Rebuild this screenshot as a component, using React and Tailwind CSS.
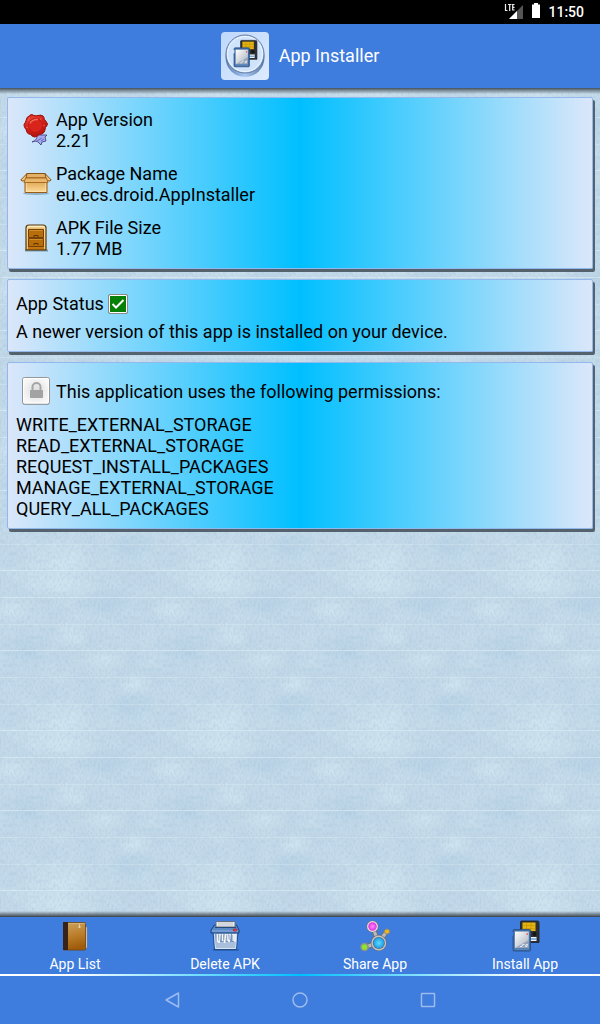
import React from "react";

const permissions = [
  "WRITE_EXTERNAL_STORAGE",
  "READ_EXTERNAL_STORAGE",
  "REQUEST_INSTALL_PACKAGES",
  "MANAGE_EXTERNAL_STORAGE",
  "QUERY_ALL_PACKAGES",
];

// Light woven fabric, one tile repeated, with a pale thread every few rows
const FabricBackground = () => (
  <svg className="absolute inset-0 w-full h-full" aria-hidden="true">
    <defs>
      <filter id="blotches" filterUnits="userSpaceOnUse" x="0" y="0" width="160" height="160" colorInterpolationFilters="sRGB">
        <feTurbulence type="fractalNoise" baseFrequency="0.05" numOctaves="4" seed="8" stitchTiles="stitch" />
        <feColorMatrix values="0 0 0 0 0.86  0 0 0 0 0.93  0 0 0 0 0.96  2.4 0 0 0 -0.9" />
      </filter>
      <filter id="weave" filterUnits="userSpaceOnUse" x="0" y="0" width="160" height="160" colorInterpolationFilters="sRGB">
        <feTurbulence type="fractalNoise" baseFrequency="0.5 0.25" numOctaves="2" seed="3" stitchTiles="stitch" />
        <feColorMatrix values="0 0 0 0 0.6  0 0 0 0 0.74  0 0 0 0 0.84  0 1.6 0 0 -0.6" />
      </filter>
      <radialGradient id="pale">
        <stop stopColor="#d6e8f2" stopOpacity=".7" />
        <stop offset="1" stopColor="#d6e8f2" stopOpacity="0" />
      </radialGradient>
      <radialGradient id="deep">
        <stop stopColor="#b0cce2" stopOpacity=".45" />
        <stop offset="1" stopColor="#b0cce2" stopOpacity="0" />
      </radialGradient>
      <pattern id="fabric" width="160" height="160" patternUnits="userSpaceOnUse">
        <rect width="160" height="160" fill="#c2d8e8" />
        <rect width="160" height="160" filter="url(#blotches)" opacity=".25" />
        <g fill="url(#pale)">
          <ellipse cx="60" cy="-4" rx="48" ry="30" />
          <ellipse cx="60" cy="156" rx="48" ry="30" />
          <ellipse cx="60" cy="18" rx="44" ry="14" />
          <ellipse cx="12" cy="42" rx="22" ry="14" />
          <ellipse cx="172" cy="42" rx="22" ry="14" />
          <ellipse cx="72" cy="66" rx="20" ry="14" />
          <ellipse cx="104" cy="92" rx="24" ry="12" />
          <ellipse cx="136" cy="116" rx="20" ry="12" />
        </g>
        <g fill="url(#deep)">
          <ellipse cx="24" cy="84" rx="40" ry="18" />
          <ellipse cx="184" cy="84" rx="40" ry="18" />
          <ellipse cx="110" cy="36" rx="40" ry="16" />
          <ellipse cx="128" cy="140" rx="30" ry="20" />
        </g>
        <rect width="160" height="160" filter="url(#weave)" opacity=".45" />
        <path d="M0 2.500h160M0 29.500h160M0 82.500h160" stroke="#e4f3f7" strokeOpacity=".5" />
        <path d="M0 56.500h160M0 109.500h160M0 136.500h160" stroke="#e4f3f7" strokeOpacity=".3" />
      </pattern>
    </defs>
    <rect width="100%" height="100%" fill="url(#fabric)" />
  </svg>
);

const SealIcon = () => (
  <svg className="w-8 h-8" viewBox="0 0 32 32" aria-hidden="true">
    <defs>
      <radialGradient id="wax" cx=".4" cy=".3" r=".75">
        <stop offset="0" stopColor="#f0503c" />
        <stop offset=".6" stopColor="#d01c16" />
        <stop offset="1" stopColor="#a80e0c" />
      </radialGradient>
    </defs>
    <path d="M17 21c0 4-1 5-5 7 3-1 5-1 6 0l3 3 1-3 4-1-1-4 2-2z" fill="#a7a9ee" stroke="#454582" strokeWidth=".9" />
    <path d="M17 27l5-3m-1 3 3-2" stroke="#686bbb" />
    <path d="M10 1q2-1 4 .5 2 .7 4 0 3-1 5 .5 1 1 1.500 3.500 2 2 3 4.500-.500 2-2 3.500-.500 4-2 5.500-2 1.500-4.500 1.500-2 2.500-4.500 2.500-2.500-.5-4-2.500-2.500-.5-3.500-2-.5-3-2-4.500-1-1.500-1-3.500 1.500-2 2-4 .5-4 4-5z" fill="url(#wax)" stroke="#99130f" />
    <path d="M9.500 3l-1.500 4M21.500 3.500l-1.500 3M6 13l3 1M25 11l-3 1" fill="none" stroke="#ff8067" strokeOpacity=".5" />
    <circle cx="15.500" cy="11.500" r="7" fill="#d9241c" stroke="#b81812" />
    <path d="M10 9.500q2-4.500 8-4" fill="none" stroke="#f06a55" strokeWidth="1.500" />
  </svg>
);

const BoxIcon = () => (
  <svg className="w-8 h-8" viewBox="0 0 32 32" aria-hidden="true">
    <defs>
      <linearGradient id="carton" x2="0" y2="1">
        <stop stopColor="#d9a04c" />
        <stop offset="1" stopColor="#ffdc9b" />
      </linearGradient>
    </defs>
    <ellipse cx="16" cy="25.500" rx="13" ry="1.500" fill="#3a6a86" opacity=".4" />
    <path d="M5 12h22v12.500H5z" fill="url(#carton)" stroke="#9b5c13" />
    <path d="M6.500 13.500h19v10h-19z" fill="none" stroke="#ffe6b6" strokeOpacity=".6" />
    <path d="M7 5.500h18l2.500 5h-23z" fill="#b97825" stroke="#8a500e" />
    <path d="M7.500 6h17l1.500 3H6z" fill="#e1b16a" />
    <path d="M7 5.500.8 12l1.200 1 3.500-.5zM25 5.500l6.200 6.500-1.200 1-3.500-.5z" fill="#f0c989" stroke="#8d5414" />
    <path d="M5.500 10h21l1.500 4.500H4z" fill="#e9b76c" stroke="#a86c22" />
  </svg>
);

const CabinetIcon = () => (
  <svg className="w-8 h-8" viewBox="0 0 32 32" aria-hidden="true">
    <defs>
      <linearGradient id="wood" x2="0" y2="1">
        <stop stopColor="#fff1c8" />
        <stop offset=".2" stopColor="#dca64d" />
        <stop offset="1" stopColor="#bd720c" />
      </linearGradient>
    </defs>
    <path d="M5 28.500h23" stroke="#325465" strokeOpacity=".5" strokeWidth="2" />
    <path d="M6 28V6q0-3 3-3h14q3 0 3 3v22z" fill="url(#wood)" stroke="#55370d" strokeWidth="1.200" />
    <path d="M7.300 27V6.500q0-2 2-2h13.400q2 0 2 2V27" fill="none" stroke="#fff0c4" strokeOpacity=".8" />
    <path d="M8.500 7.500h15v8h-15zm0 9h15v8h-15z" fill="#b96d09" stroke="#744107" />
    <path d="M9.500 8.500h13m-13 9h13" stroke="#d28c2b" />
    <path d="M14 15v-1.500h4V15m-4 8v-1.500h4V23" fill="none" stroke="#593407" />
  </svg>
);

const LockIcon = () => (
  <svg className="w-8 h-8" viewBox="0 0 32 32" aria-hidden="true">
    <defs>
      <radialGradient id="plate">
        <stop stopColor="#dcdcdc" />
        <stop offset="1" stopColor="#f7f7f7" />
      </radialGradient>
    </defs>
    <rect x="2.500" y="3" width="27" height="27" rx="2" fill="#24465b" opacity=".35" />
    <rect x="2.500" y="2.500" width="27" height="26.500" rx="2" fill="url(#plate)" stroke="#969696" />
    <rect x="3.500" y="3.500" width="25" height="24.500" rx="1" fill="none" stroke="#fff" />
    <path d="M12.500 15v-3a4 4 0 0 1 8 0v3" fill="none" stroke="#a6a6a6" strokeWidth="2" />
    <rect x="10" y="15" width="13" height="8" rx=".8" fill="#a3a3a3" />
  </svg>
);

// Two memory cards, shared by the launcher icon and the install button
const CardsDrawing = () => (
  <g>
    <path d="M12.500 1h16q1.500 0 1.500 1.500v20H11.500V2q0-1 1-1z" fill="#303030" stroke="#1c2025" strokeWidth=".8" />
    <path d="M13.500 2.500h13v8.500h-13z" fill="#e5b510" />
    <path d="M13.500 5.500h13m-13 3h13M17.500 2.500V11m4.500-8.500V11" stroke="#bd8e08" strokeWidth=".6" />
    <circle cx="25.500" cy="14" r="2" fill="#151515" />
    <path d="M20.500 17h7v4h-7z" fill="#edf5ff" />
    <path d="M20.500 19h7" stroke="#3579be" />
    <path d="M5 9.500h15.500q1 0 1 1v19.500q0 1-1 1H5q-1 0-1-1V16l1-1v-2.500l-1-1q0-2 1-2z" fill="#426ca4" stroke="#244c80" strokeWidth=".8" />
    <path d="M5.800 11.500h14V28h-14z" fill="url(#cardLabel)" />
    <path d="M5.800 28 19.800 20v8z" fill="#7d91ad" opacity=".6" />
    <path d="M5.500 29h14.500" stroke="#6e9bd0" />
    <path d="M17.500 14h1.500" stroke="#e25050" strokeWidth="1.500" />
    <path d="M15.500 24.500h-2l-.5 2h-2m5.500 0 .5-2h1.500l-.5 2z" fill="none" stroke="#eef6ff" strokeWidth=".8" />
  </g>
);

const AppIcon = () => (
  <svg className="w-12 h-12" viewBox="0 0 48 48" aria-hidden="true">
    <defs>
      <linearGradient id="tile" y2="1">
        <stop stopColor="#bdd8fc" />
        <stop offset="1" stopColor="#deebff" />
      </linearGradient>
      <linearGradient id="rim">
        <stop stopColor="#597eb1" />
        <stop offset=".5" stopColor="#a9c8f5" />
        <stop offset="1" stopColor="#55779f" />
      </linearGradient>
      <linearGradient id="cardLabel" x2="1" y2="1">
        <stop stopColor="#fff" />
        <stop offset="1" stopColor="#a6afbd" />
      </linearGradient>
    </defs>
    <rect width="48" height="48" rx="4" fill="url(#tile)" />
    <circle cx="24" cy="25.500" r="19.500" fill="url(#rim)" />
    <circle cx="24" cy="22" r="19" fill="#d0e3fc" stroke="#60799e" />
    <circle cx="24" cy="22" r="17.500" fill="none" stroke="#edf6ff" />
    <g transform="translate(9.500 7.500) scale(.88)">
      <CardsDrawing />
    </g>
  </svg>
);

const InstallIcon = () => (
  <svg className="w-8 h-8" viewBox="0 0 32 32" aria-hidden="true">
    <CardsDrawing />
  </svg>
);

const BookIcon = () => (
  <svg className="w-8 h-8" viewBox="0 0 32 32" aria-hidden="true">
    <defs>
      <linearGradient id="cover" x2=".2" y2="1">
        <stop stopColor="#caa363" />
        <stop offset=".5" stopColor="#bd822f" />
        <stop offset="1" stopColor="#a05c0a" />
      </linearGradient>
    </defs>
    <path d="M26 7h2V28h-2z" fill="#ddd8cb" stroke="#898980" strokeWidth=".6" />
    <path d="M4.500 2.500h21q1 0 1 1V29q0 1-1 1h-21z" fill="url(#cover)" stroke="#70430d" strokeWidth=".8" />
    <path d="M4 2h5v28H4z" fill="#38231b" />
    <path d="M9.500 3.500h16" stroke="#d9b67a" strokeWidth=".8" />
    <path d="M20.500 4v4m-1.500-1h3" stroke="#f1dcac" strokeWidth=".8" />
  </svg>
);

const ShredderIcon = () => (
  <svg className="w-8 h-8" viewBox="0 0 32 32" aria-hidden="true">
    <path d="M4 30h26" stroke="#173e78" strokeOpacity=".4" strokeWidth="2" />
    <path d="M4 12h25l-1.500 17.500h-22z" fill="#83a8d8" stroke="#234d84" />
    <path d="M5.500 13h22l-1 15.500H6.500z" fill="#6f96cc" stroke="#d5e5f8" />
    <path d="M7 22h19v6H7z" fill="#a9bfdc" />
    <path d="M5.500 5h22l2.500 5v3H2v-3z" fill="#5b89c6" stroke="#173f7b" />
    <path d="M3 11h26" stroke="#8bb0e2" />
    <path d="M7 1.500h19V7H7z" fill="#e9edf1" stroke="#68717b" />
    <path d="M9 3h15M9 5h15" stroke="#b9c2c9" />
    <path d="M6 7.500h21" stroke="#244a7b" />
    <path d="M8.500 14v8m2.500-8-1 9m3.500-9v7m3-7-1 9m3-9v7m2.500-7-1 8m4-8v7m2-7v8" fill="none" stroke="#f4f6f7" strokeWidth="1.800" />
    <path d="M9.800 15v6m2.500-6v7m2.500-7v5m3-5v7m2.500-7v5m3-5v6" fill="none" stroke="#7c8ea6" strokeWidth=".6" />
    <ellipse cx="26" cy="10" rx="2" ry="1.200" fill="#ed343f" stroke="#8e2335" strokeWidth=".5" />
  </svg>
);

const ShareIcon = () => (
  <svg className="w-8 h-8" viewBox="0 0 32 32" aria-hidden="true">
    <defs>
      <radialGradient id="blueBall">
        <stop stopColor="#5fdcff" />
        <stop offset="1" stopColor="#1c9ce6" />
      </radialGradient>
      <radialGradient id="pinkBall">
        <stop stopColor="#ff8cff" />
        <stop offset="1" stopColor="#dc2fdc" />
      </radialGradient>
    </defs>
    <path d="M14 8l5 13M20 22l8-11M19 23 6 27" stroke="#6d7178" strokeWidth="5" />
    <path d="M14 8l5 13M20 22l8-11M19 23 6 27" stroke="#bbb" strokeWidth="3" />
    <circle cx="13.500" cy="6.500" r="6" fill="#777" />
    <circle cx="13.500" cy="6.500" r="5.400" fill="#e8dfe6" />
    <circle cx="13.500" cy="6.500" r="4.200" fill="url(#pinkBall)" />
    <circle cx="19.800" cy="23" r="8" fill="#696e74" />
    <circle cx="19.800" cy="23" r="7.400" fill="#c2c2c2" />
    <circle cx="19.800" cy="23" r="6" fill="#576979" />
    <circle cx="19.800" cy="23" r="5.400" fill="url(#blueBall)" />
    <circle cx="28" cy="11.500" r="2.500" fill="#efb81c" stroke="#94896f" />
    <circle cx="5.500" cy="27" r="3.600" fill="#8ce334" stroke="#8b918b" strokeWidth="1.500" />
  </svg>
);

const StatusBar = () => (
  <div className="h-6 bg-black flex items-center justify-end pr-4 text-white">
    <svg className="w-5 h-6" viewBox="0 0 20 24" aria-hidden="true">
      <path d="M19 5v14H5z" fill="#555" />
      <path d="M13 11v8H5z" fill="#fff" />
      <path d="M1.500 4v6.500h2M4 4.500h3.500M5.700 4v7M10.500 4.500H8.700v5.500h1.800M8.500 7.300h2" fill="none" stroke="#000" strokeWidth="3" />
      <path d="M1.500 4v6.500h2M4 4.500h3.500M5.700 4v7M10.500 4.500H8.700v5.500h1.800M8.500 7.300h2" fill="none" stroke="#eee" strokeWidth="1.200" />
    </svg>
    <svg className="ml-2 w-2 h-6" viewBox="0 0 8 24" aria-hidden="true">
      <path d="M2 3h4v1.500h2V18H0V4.500h2z" fill="#fff" />
    </svg>
    <span className="ml-2 text-sm font-medium">11:50</span>
  </div>
);

const Card = ({ children }) => (
  <section className="rounded-xs border border-[#92b8ee] bg-[linear-gradient(90deg,#dbe7fa,#00bfff_50%,#dbe7fa)] px-2 pb-[9px] shadow-[2px_3px_0_#54626e]">
    {children}
  </section>
);

const InfoRow = ({ icon, label, value }) => (
  <div className="flex items-center">
    <div className="w-10 flex justify-center">{icon}</div>
    <dl>
      <dt>{label}</dt>
      <dd>{value}</dd>
    </dl>
  </div>
);

const TabButton = ({ icon, label }) => (
  <button type="button" className="flex flex-col items-center gap-0.5 pt-[3px] text-sm text-white">
    {icon}
    <span>{label}</span>
  </button>
);

const App = () => {
  return (
    <div className="min-h-screen flex flex-col font-[Roboto,sans-serif] bg-[#3e7cdd]">
      <StatusBar />

      <header className="h-16 flex items-center justify-center gap-2.5 text-white">
        <AppIcon />
        <h1 className="text-lg">App Installer</h1>
      </header>

      <main className="relative flex-1">
        <FabricBackground />
        <div className="absolute inset-x-0 top-0 h-1.5 bg-linear-to-b from-[#44525c] to-transparent"></div>
        <div className="absolute inset-x-0 bottom-0 h-1.5 bg-linear-to-t from-[#394149] to-transparent"></div>

        <div className="relative flex flex-col gap-2.5 px-[7px] pt-[9px] text-lg leading-[21px] text-black">
          <Card>
            <div className="flex flex-col gap-3 pt-[11px]">
              <InfoRow icon={<SealIcon />} label="App Version" value="2.21" />
              <InfoRow icon={<BoxIcon />} label="Package Name" value="eu.ecs.droid.AppInstaller" />
              <InfoRow icon={<CabinetIcon />} label="APK File Size" value="1.77 MB" />
            </div>
          </Card>

          <Card>
            <div className="flex items-center gap-1 pt-[13px]">
              <label htmlFor="status">App Status</label>
              <span className="relative w-5 h-5">
                <input
                  id="status"
                  type="checkbox"
                  defaultChecked
                  className="block appearance-none w-5 h-5 rounded-xs border border-[#8a8a8a] bg-[#078007] shadow-[inset_0_0_0_1px_#fff]"
                />
                <svg className="absolute inset-0 w-5 h-5 pointer-events-none" viewBox="0 0 20 20" aria-hidden="true">
                  <path d="M4.500 10l3.500 3.500L15.500 6" fill="none" stroke="#fff" strokeWidth="2" />
                </svg>
              </span>
            </div>
            <p className="pt-[7px]">A newer version of this app is installed on your device.</p>
          </Card>

          <Card>
            <div className="flex items-center pt-2 h-12">
              <div className="w-10 flex justify-center">
                <LockIcon />
              </div>
              <h2>This application uses the following permissions:</h2>
            </div>
            <ul className="pt-[3px]">
              {permissions.map((permission) => (
                <li key={permission}>{permission}</li>
              ))}
            </ul>
          </Card>
        </div>
      </main>

      {/* Bottom actions */}
      <footer>
        <div className="grid grid-cols-4">
          <TabButton icon={<BookIcon />} label="App List" />
          <TabButton icon={<ShredderIcon />} label="Delete APK" />
          <TabButton icon={<ShareIcon />} label="Share App" />
          <TabButton icon={<InstallIcon />} label="Install App" />
        </div>
        <div className="h-0.5 bg-[linear-gradient(90deg,#fff,#fff_12%,#00bfff_50%,#fff_88%,#fff)]"></div>
      </footer>

      {/* System navigation */}
      <nav className="h-12 flex items-center justify-center gap-26 text-[#9cbcee]">
        <button type="button" aria-label="Back">
          <svg className="w-6 h-6" viewBox="0 0 24 24" fill="none" stroke="currentColor" strokeWidth="1.500">
            <path d="M18.500 5v14L6 12z" strokeLinejoin="round" />
          </svg>
        </button>
        <button type="button" aria-label="Home">
          <svg className="w-6 h-6" viewBox="0 0 24 24" fill="none" stroke="currentColor" strokeWidth="1.500">
            <circle cx="12" cy="12" r="7" />
          </svg>
        </button>
        <button type="button" aria-label="Recent apps">
          <svg className="w-6 h-6" viewBox="0 0 24 24" fill="none" stroke="currentColor" strokeWidth="1.500">
            <rect x="5.500" y="5.500" width="13" height="13" rx=".5" />
          </svg>
        </button>
      </nav>
    </div>
  );
};

export default App;
